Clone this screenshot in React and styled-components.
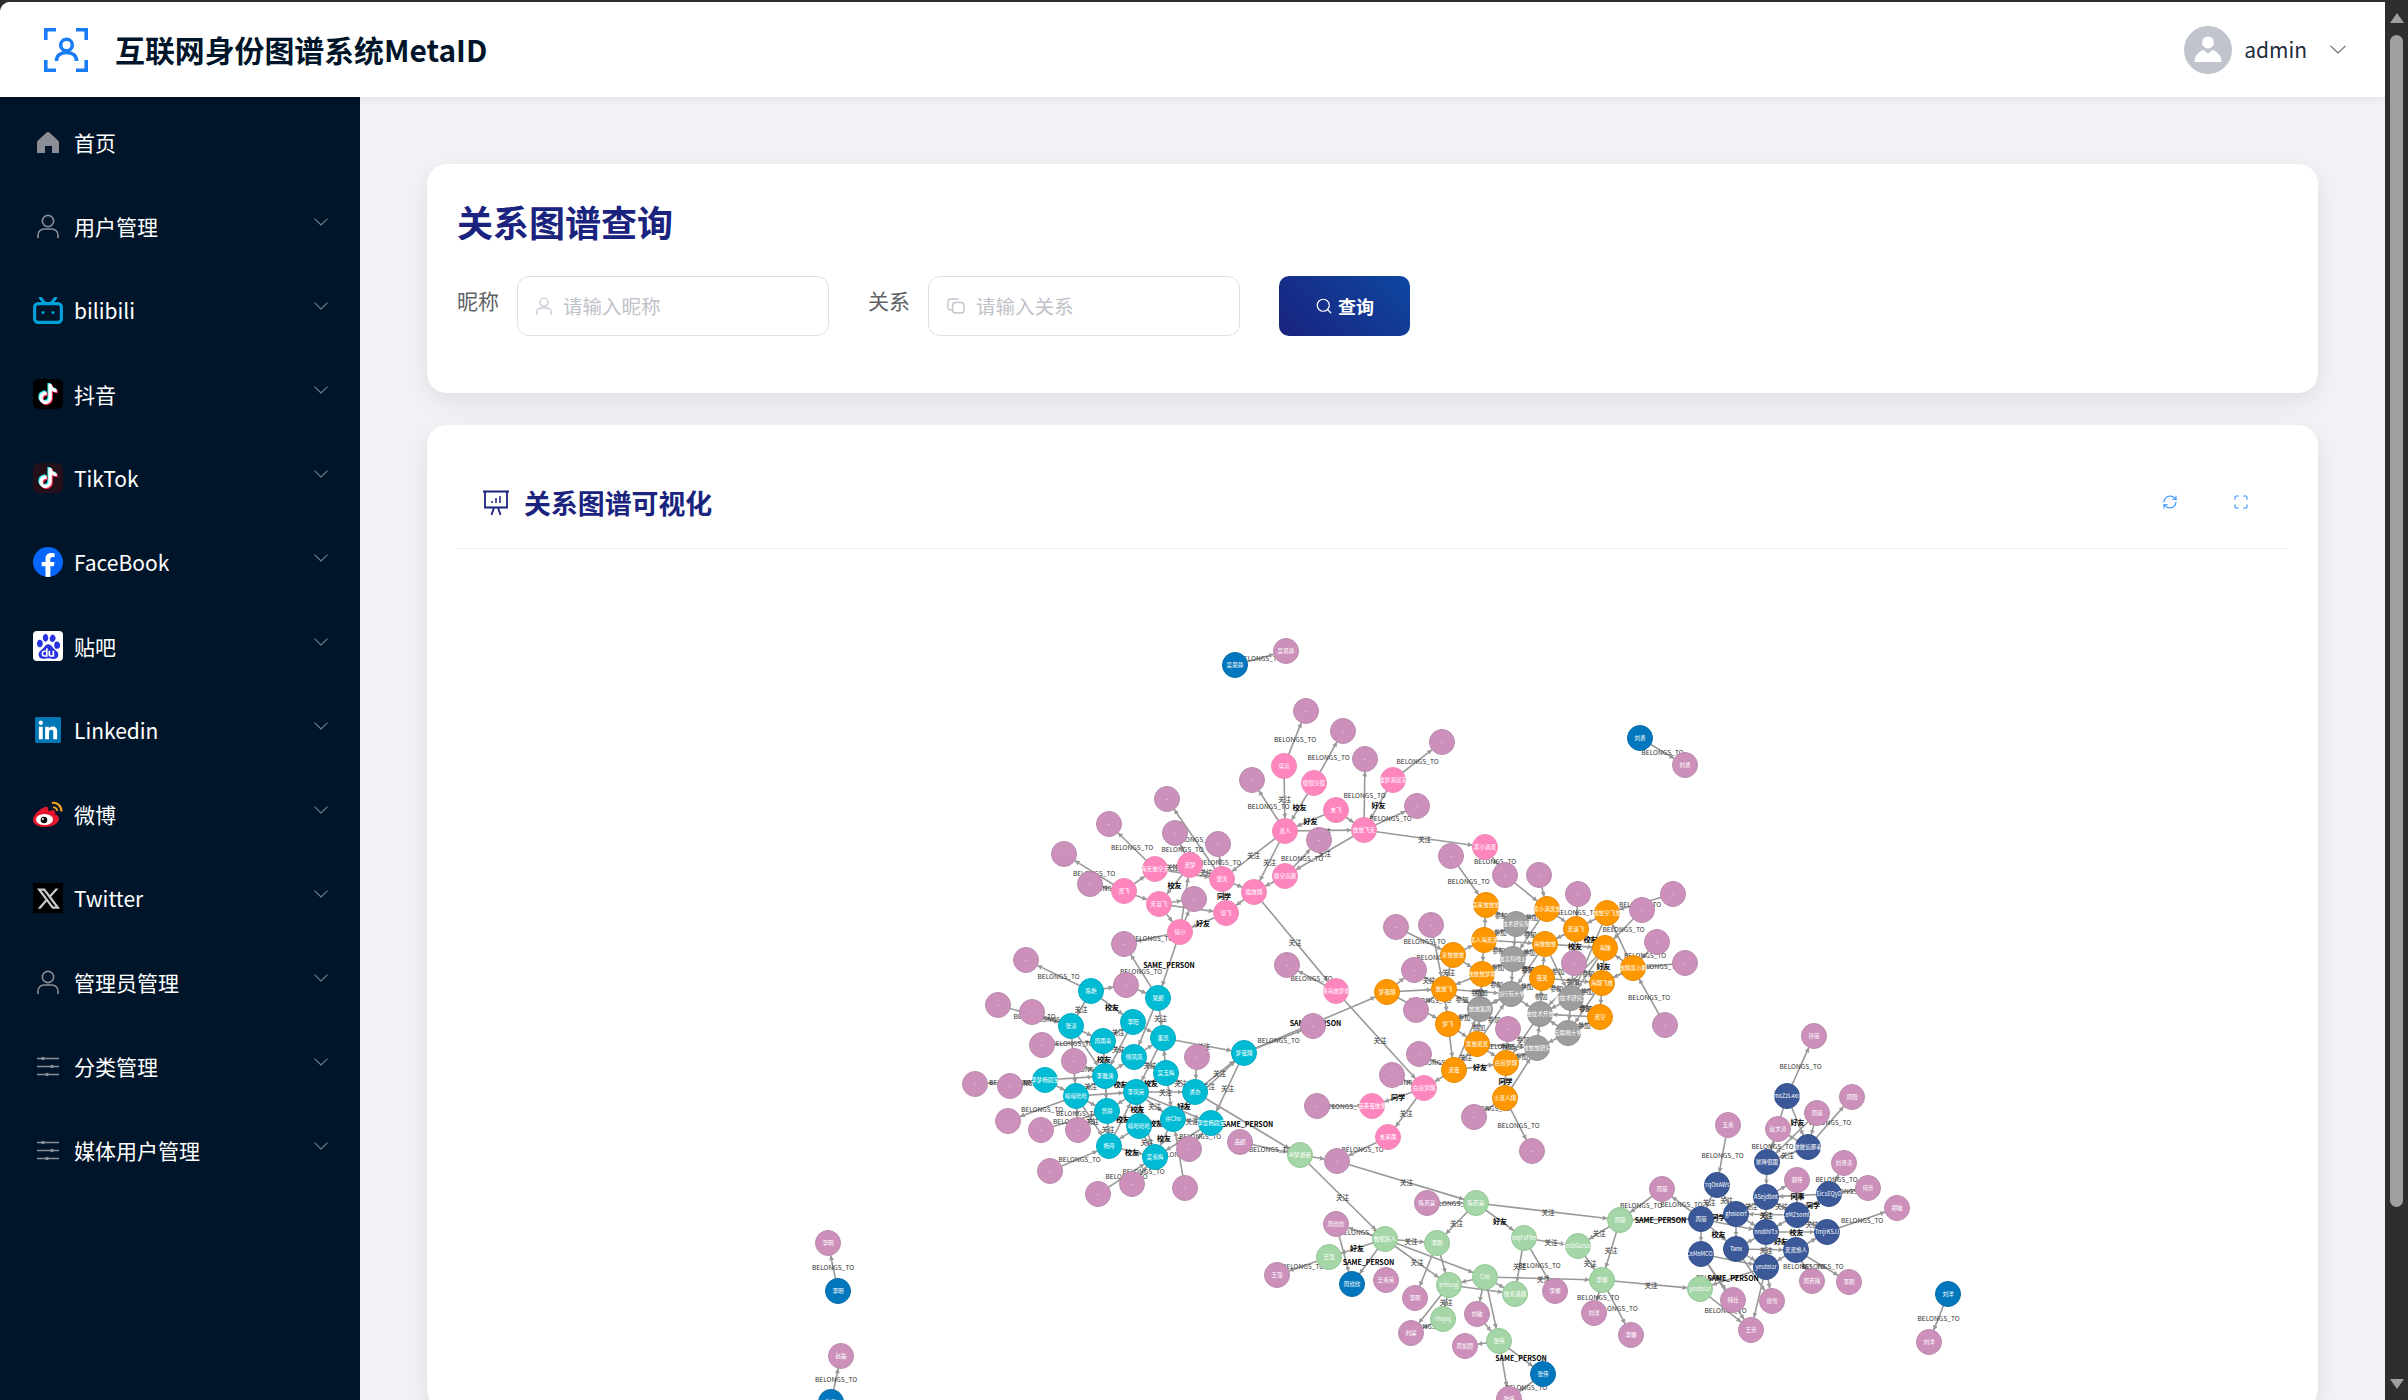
import React from 'react';
import styled, { createGlobalStyle } from 'styled-components';
import { Search, RefreshCw, Maximize } from 'lucide-react';
import { SiTiktok, SiBaidu, SiLinkedin } from 'react-icons/si';
import { RiTwitterXLine } from 'react-icons/ri';

const FONT = '"Noto Sans CJK SC", "Noto Sans", sans-serif';

const GlobalStyle = createGlobalStyle`
    html, body {
        margin: 0;
        padding: 0;
        background: #2e2e2e;
        overflow: hidden;
        font-family: ${FONT};
    }
    * {
        box-sizing: border-box;
    }
`;

// id x y kind label (positions are page coordinates)
const NODE_DATA = `
b1 1235 665 b 吴思静
q1 1286 651 u 吴思静
b2 1640 738 b 刘勇
q2 1685 765 u 刘勇
k1 1284 766 k 穿高
k2 1314 783 k 很很尖很
k3 1393 780 k 谁梦满昆东
k4 1336 810 k 未飞
k5 1364 830 k 放放飞天
k6 1285 831 k 灵人
k7 1285 876 k 跳空高跳
k8 1155 869 k 海天放空天
k9 1190 865 k 灵梦
k10 1222 879 k 灌天
k11 1254 892 k 猫放翔
k12 1124 891 k 灵飞
k13 1159 904 k 天蓝飞
k14 1226 913 k 穿飞
k15 1180 932 k 惊小
k16 1485 847 k 黑小满灵
k17 1336 991 k 珠海放梦燎
k18 1424 1088 k 白煎梦翔
k19 1372 1106 k 品茶夜放笑
k20 1388 1137 k 未来雨
p1 1306 711 u -
p2 1343 731 u -
p3 1442 742 u -
p4 1365 759 u -
p5 1252 780 u -
p6 1417 806 u -
p7 1319 840 u -
p8 1167 799 u -
p9 1109 824 u -
p10 1175 833 u -
p11 1218 844 u -
p12 1064 854 u -
p13 1090 884 u -
p14 1194 899 u -
p15 1124 944 u -
p16 1451 856 u -
c1 1091 991 c 陈艳
c2 1158 998 c 梵朗
c3 1071 1026 c 张涛
c4 1133 1022 c 李阳
c5 1163 1038 c 董凯
c6 1103 1041 c 周雨青
c7 1134 1057 c 傅凤凤
c8 1166 1073 c 吴玉梅
c9 1105 1076 c 李雅涵
c10 1045 1080 c 李梦杨圆宝
c11 1076 1096 c 嘻嘻哈哈
c12 1136 1092 c 李凤英
c13 1195 1092 c 勇办
c14 1107 1111 c 曾静
c15 1139 1126 c 嘻哈哈哈
c16 1173 1119 c 许Cho
c17 1211 1123 c 李世杨圆宝
c18 1109 1146 c 杨丹
c19 1155 1157 c 吴秀梅
c20 1244 1053 c 梦夜翔
r1 1026 960 u -
r2 1126 985 u -
r3 998 1005 u -
r4 1032 1012 u -
r5 1042 1045 u -
r6 1074 1061 u -
r7 1197 1057 u -
r8 975 1084 u -
r9 1010 1086 u -
r10 1008 1121 u -
r11 1041 1130 u -
r12 1078 1130 u -
r13 1240 1142 u 品朗
r14 1189 1149 u -
r15 1050 1171 u -
r16 1132 1184 u -
r17 1098 1194 u -
r18 1185 1188 u -
t1 1287 965 u -
t2 1313 1026 u -
t3 1317 1106 u -
t4 1337 1161 u -
o1 1387 992 o 梦夜翔
o2 1486 905 o 菜来放放放
o3 1547 909 o 黑小满灵放
o4 1607 913 o 放放空飞放
o5 1576 929 o 灵速飞
o6 1484 940 o 黑人海灵灵
o7 1545 944 o 海放放放
o8 1605 948 o 海翔
o9 1453 955 o 亲放放放
o10 1633 968 o 放翔黑小鹏
o11 1482 974 o 放放放梦翔
o12 1542 978 o 夜灵
o13 1602 983 o 海翔飞放
o14 1444 989 o 放放飞
o15 1600 1017 o 灵空
o16 1448 1024 o 梦飞
o17 1477 1044 o 黑放灵灵
o18 1506 1063 o 白煎梦翔
o19 1454 1070 o 灵夜
o20 1505 1098 o 小灵人翔
g1 1516 924 g 技术研究院
g2 1513 959 g 放放高科技公司
g3 1511 994 g 创行有大学
g4 1571 998 g 数技术研究放
g5 1480 1009 g 放放集团
g6 1540 1014 g 放技术开放
g7 1568 1033 g 五联网大学
g8 1537 1048 g 放放放研究
s1 1505 875 u -
s2 1539 875 u -
s3 1578 894 u -
s4 1673 894 u -
s5 1642 910 u -
s6 1396 927 u -
s7 1431 925 u -
s8 1657 942 u -
s9 1685 963 u -
s10 1574 963 u -
s11 1414 970 u -
s12 1416 1010 u -
s13 1508 1029 u -
s14 1665 1025 u -
s15 1419 1054 u -
s16 1392 1075 u -
s17 1474 1117 u -
s18 1532 1151 u -
e1 1300 1155 e AI梦游者
e2 1476 1203 e 陈若昊
e3 1620 1220 e 周丽
e4 1385 1239 e 数据狂人
e5 1437 1243 e 李刚
e6 1524 1238 e 9tqF3Ffm
e7 1578 1246 e TechGuru88
e8 1329 1257 e 王强
e9 1485 1277 e Cell
e10 1602 1280 e 李娜
e11 1449 1285 e erh50yj
e12 1515 1294 e 搜索淄烟
e13 1700 1289 e yeut8l1r
e14 1443 1319 e rhsyuj
e15 1499 1341 e 张伟
u1 1427 1203 u 陈若昊
u2 1336 1224 u 周欣欣
u3 1277 1275 u 王强
u4 1386 1280 u 王秀英
u5 1415 1298 u 李刚
u6 1555 1291 u 李娜
u7 1594 1313 u 刘洋
u8 1477 1314 u 刘敏
u9 1411 1333 u 刘昊
u10 1631 1335 u 李娜
u11 1465 1346 u 周如霞
u12 1509 1399 u 张伟
v1 1352 1284 b 周欣欣
v2 1543 1374 b 张伟
n1 1787 1096 n m6ZzL4x0
n2 1808 1147 n 做做追那看
n3 1767 1162 n 暴降很跟
n4 1717 1185 n 7qO8AWs
n5 1829 1194 n Eic1EQyD
n6 1766 1197 n ASejdbnt
n7 1797 1215 n L8MZ5omU
n8 1736 1214 n gh8l6erf
n9 1701 1219 n 周丽
n10 1766 1232 n nndlhIT3
n11 1827 1232 n TmjrKSJJ
n12 1736 1249 n Tanx
n13 1701 1254 n C8M8MCO1
n14 1796 1250 n 灵灵旅人
n15 1766 1267 n yeut8l1r
w1 1814 1036 u 孙丽
w2 1852 1097 u 周阳
w3 1817 1113 u 周丽
w4 1728 1125 u 五秀
w5 1778 1129 u 赵文涛
w6 1844 1163 u 刘泽涛
w7 1797 1180 u 郑伟
w8 1868 1188 u 何芳
w9 1662 1189 u 周丽
w10 1897 1208 u 郑敏
w11 1812 1281 u 周若曦
w12 1849 1282 u 李刚
w13 1733 1300 u 韩壮
w14 1772 1301 u 唐雪
w15 1751 1330 u 王芳
b3 1948 1294 b 刘洋
x1 1929 1342 u 刘洋
z1 828 1243 u 李明
b4 838 1291 b 李明
z2 841 1356 u 赵磊
b5 831 1402 b 赵磊
`;

// from to label: B belongs, F follow, Y friend, X alumni, T classmate, W colleague, S same person, C joined, - none
const EDGE_DATA = `
b1 q1 B
b2 q2 B
k1 p1 B
k2 p2 B
k5 p4 B
k3 p3 B
k6 p5 B
k3 k5 Y
k1 k6 F
k2 k6 X
k4 k6 Y
k6 k5 F
k5 k7 F
k7 p7 B
k6 k11 F
k6 k10 F
k4 k5 -
k5 p6 B
k5 k16 F
k7 k11 -
k16 s1 B
p16 o2 B
k8 p9 B
k10 p8 B
k9 p10 B
k10 p11 B
k12 p12 B
k12 p13 B
k13 p14 -
k15 p15 B
k8 k9 F
k8 k10 -
k9 k10 F
k10 k11 -
k12 k13 -
k13 k14 -
k13 k15 -
k14 k15 Y
k11 k14 -
k9 k13 X
k10 k14 T
k12 k8 -
k15 k9 -
k15 p14 -
k11 k17 F
k17 t1 B
k17 k18 F
k15 c2 S
c1 r1 B
c2 p15 B
c1 r2 -
r2 c2 -
r3 c3 B
r4 c3 B
r5 c6 B
r6 c9 B
c10 r8 B
c10 r9 B
c11 r10 B
r11 c14 B
r12 c11 B
r15 c18 B
r17 c19 B
r16 c19 B
r18 c16 B
r14 c17 B
r7 c13 -
r13 e1 B
c13 e1 S
c5 c20 F
c13 c20 F
c16 c20 F
c20 c17 F
c20 t2 B
c20 o1 S
c1 c4 X
c1 c3 F
c2 c5 F
c4 c5 -
c4 c6 F
c3 c6 -
c3 c9 -
c6 c7 F
c6 c9 X
c7 c8 F
c7 c5 -
c8 c5 -
c9 c12 X
c9 c7 -
c9 c11 F
c10 c11 -
c10 c9 -
c11 c12 -
c11 c14 -
c12 c13 F
c12 c8 X
c12 c15 X
c12 c14 -
c13 c16 Y
c13 c8 F
c8 c16 -
c14 c15 X
c14 c18 F
c15 c18 -
c15 c19 F
c16 c19 X
c16 c17 F
c17 c19 F
c18 c19 X
c18 c12 -
c19 c12 -
c15 c16 X
c11 c18 F
c12 c16 F
c5 c12 -
c4 c9 -
c6 c14 -
c2 c7 -
c9 c14 -
c3 c11 -
c12 c17 -
s1 o3 -
s2 o3 -
s3 o5 B
s4 o4 B
s5 o8 B
s8 o10 B
s9 o10 B
s10 o13 -
s6 o9 B
s7 o14 B
s11 o14 F
o1 s11 -
o1 o14 -
o1 o16 -
o14 s12 B
o14 o16 -
o9 o14 F
o9 o6 -
o9 o11 -
o6 o2 -
o6 o11 -
o11 o14 -
o2 g1 C
o3 g1 C
o3 o5 -
o5 o7 -
o6 g2 C
o7 g2 C
o7 g1 -
o12 g2 C
o12 g3 C
o11 g3 C
o14 g5 C
o16 g5 C
g5 o11 C
o5 g4 C
o8 g4 C
o13 g4 C
o12 g4 C
o15 g7 C
o15 g4 C
o13 g6 C
g6 o12 C
g6 o18 C
g7 g6 -
o17 g8 C
o18 g8 C
o3 g2 C
o6 g1 C
o7 g3 C
o11 g2 C
o14 g3 C
o16 g3 C
o17 g5 C
o17 g3 C
o8 g6 C
o13 g7 C
o10 g4 C
o7 g4 C
o5 g2 C
o4 g4 -
o19 g5 -
o20 g8 -
o16 o17 -
o16 o19 -
o17 o19 F
o17 o18 -
o19 o18 Y
o19 s15 B
o19 k18 -
s16 k18 B
k18 k19 T
k18 k20 F
k19 t3 B
o18 o20 T
o20 s17 B
o20 s18 B
o10 o13 -
o10 o8 -
o10 o4 -
o4 o5 -
o8 o13 Y
o13 o15 -
o15 g6 -
s13 o18 B
s14 o10 B
g1 g2 -
g2 g3 -
g3 g5 -
g3 g6 -
g4 g7 -
g7 g8 -
g8 g6 -
o12 o7 -
o12 o13 -
o7 o8 X
o5 o8 X
o6 o7 -
k20 t4 B
e1 t4 -
t4 e2 F
e1 e4 F
u1 e2 B
e2 e3 F
e2 e5 F
e2 e6 Y
e3 n9 S
e3 e7 F
e3 e10 F
e6 e7 F
e7 e10 F
e4 e5 F
e4 e11 F
e4 e9 -
e4 e8 Y
e4 u2 B
e8 u3 B
e4 v1 S
u2 v1 -
e5 e11 -
e5 u5 -
e9 e10 F
e9 e11 -
e10 e13 F
e9 e12 -
e11 e12 -
e6 e12 F
e6 u6 B
e10 u7 B
e10 u10 B
e11 e14 F
e9 u8 -
e9 e15 -
u8 e15 -
e15 u11 -
e15 v2 S
v2 u12 B
e15 u12 -
e11 u9 -
e14 u9 B
n1 w1 B
n1 n2 Y
n1 n3 -
n2 w2 B
n2 w5 -
n3 w5 B
n2 n3 F
n3 n6 -
w3 n3 -
w3 n2 -
w4 n4 B
n4 n8 F
n4 n9 F
n6 w7 -
n6 n7 F
w7 n7 -
n5 w6 B
n5 n7 T
n5 w8 B
n5 n6 W
n11 w10 B
n6 n8 F
n6 n10 F
n7 n8 F
n7 n10 -
n7 n11 F
n8 n9 T
n8 n10 -
n8 n12 -
n9 n10 -
n9 n12 X
n9 n13 -
n9 w9 B
n10 n11 X
n10 n14 Y
n10 n12 -
n10 n15 -
n12 n14 F
n12 n15 -
n13 n15 -
n14 n15 -
n14 n11 -
n14 w11 B
n14 w12 B
n13 w13 B
n13 w15 -
n12 w14 -
n15 e13 S
n15 w14 -
n15 w15 -
e13 w15 B
w9 e3 B
b3 x1 B
b4 z1 B
b5 z2 B
`;

const NODES = NODE_DATA.trim().split('\n').map((line) => {
    const [id, x, y, kind, label] = line.split(' ');
    return { id, x: Number(x), y: Number(y), kind, label };
});

const NODE_BY_ID = Object.fromEntries(NODES.map((node) => [node.id, node]));

const EDGES = EDGE_DATA.trim().split('\n').map((line) => {
    const [from, to, type] = line.split(' ');
    return { from: NODE_BY_ID[from], to: NODE_BY_ID[to], type };
});

const EDGE_TEXT = {
    B: 'BELONGS_TO',
    F: '关注',
    Y: '好友',
    X: '校友',
    T: '同学',
    W: '同事',
    S: 'SAME_PERSON',
    C: '参加'
};

const STRONG_TYPES = 'YXTSW';

const NODE_COLORS = {
    u: ['#cc90ba', '#b98aac'],
    k: ['#ff85bf', '#ee8ab8'],
    c: ['#00bbd4', '#00acc1'],
    o: ['#ff9800', '#e68a00'],
    g: ['#9e9e9e', '#8f8f8f'],
    e: ['#a5d6a7', '#92c695'],
    n: ['#3b5998', '#34508a'],
    b: ['#0277bd', '#026aa8']
};

const NODE_RADIUS = 12.5;

const Frame = styled.div`
    display: flex;
    width: 2408px;
    height: 1400px;
    overflow: hidden;
    background: #2e2e2e;
`;

const Viewport = styled.div`
    flex: 1;
    display: flex;
    flex-direction: column;
    min-width: 0;
    margin-top: 2px;
    overflow: hidden;
    border-top-left-radius: 10px;
    background: #f0f2f5;
`;

const ScrollRail = styled.div`
    display: flex;
    flex-direction: column;
    align-items: center;
    width: 23px;
    padding-top: 13px;
`;

const ScrollThumb = styled.div`
    width: 13px;
    height: 1172px;
    margin-top: 12px;
    border-radius: 7px;
    background: #9f9f9f;
`;

const ScrollUp = styled.div`
    width: 0;
    height: 0;
    border-left: 7px solid transparent;
    border-right: 7px solid transparent;
    border-bottom: 10px solid #9f9f9f;
`;

const ScrollDown = styled.div`
    width: 0;
    height: 0;
    margin-top: auto;
    margin-bottom: 11px;
    border-left: 7px solid transparent;
    border-right: 7px solid transparent;
    border-top: 10px solid #9f9f9f;
`;

const TopBar = styled.header`
    position: relative;
    z-index: 2;
    flex: none;
    display: flex;
    align-items: center;
    height: 95px;
    padding: 0 39px 0 44px;
    background: #fff;
    box-shadow: 0 2px 8px rgba(0, 0, 0, 0.06);
`;

const LogoMark = styled.svg`
    width: 44px;
    height: 44px;
    flex: none;
    margin-top: 1px;
    color: #1a7cf5;
`;

const BrandName = styled.h1`
    margin: 0 0 2px 27px;
    font-size: 29.9px;
    line-height: 44px;
    font-weight: 700;
    color: #001529;
`;

const UserArea = styled.div`
    display: flex;
    align-items: center;
    margin-left: auto;
`;

const Avatar = styled.div`
    display: flex;
    width: 48px;
    height: 48px;
    border-radius: 50%;
    background: #c0c5cd;
`;

const UserName = styled.span`
    margin: 0 0 2px 12px;
    font-size: 21px;
    color: #1f2d3d;
`;

const CaretDown = styled.svg`
    width: 16px;
    height: 9px;
    margin-left: 23px;
    fill: none;
    stroke: #666;
    stroke-width: 1.1;
`;

const Body = styled.div`
    flex: 1;
    display: flex;
    min-height: 0;
`;

const Sidebar = styled.nav`
    flex: none;
    width: 360px;
    padding-top: 3px;
    background: #001529;
`;

const MenuItem = styled.div`
    display: flex;
    align-items: center;
    height: 84px;
    padding: 0 32px 0 33px;
    font-size: 21px;
    color: #fff;
`;

const MenuIcon = styled.span`
    flex: none;
    display: flex;
    align-items: center;
    justify-content: center;
    width: 30px;
    height: 30px;
    margin-right: 11px;
    color: #8b8e96;
`;

const MenuCaret = styled.svg`
    width: 14px;
    height: 8px;
    margin-left: auto;
    margin-bottom: 8px;
    fill: none;
    stroke: rgba(255, 255, 255, 0.45);
    stroke-width: 1.1;
`;

const TikTokBadge = styled.span`
    position: relative;
    display: block;
    width: 30px;
    height: 30px;
    border-radius: 6px;
    background: ${(props) => props.$bg};
    svg {
        position: absolute;
        top: 5px;
        left: 5px;
        width: 20px;
        height: 20px;
    }
`;

const SquareBadge = styled.span`
    display: flex;
    align-items: center;
    justify-content: center;
    width: ${(props) => props.$size}px;
    height: ${(props) => props.$size}px;
    border-radius: ${(props) => props.$radius}px;
    background: ${(props) => props.$bg};
    color: ${(props) => props.$color};
`;

const Main = styled.main`
    flex: 1;
    min-width: 0;
    padding: 67px 67px 0;
    overflow: hidden;
`;

const QueryCard = styled.section`
    height: 229px;
    padding: 35px 30px 0;
    border-radius: 20px;
    background: #fff;
    box-shadow: 0 8px 24px rgba(0, 0, 0, 0.08);
`;

const PageTitle = styled.h2`
    margin: 0 0 33px;
    font-size: 36px;
    line-height: 44px;
    font-weight: 700;
    color: #1a237e;
`;

const QueryForm = styled.form`
    display: flex;
    align-items: flex-start;
`;

const FieldLabel = styled.label`
    width: 42px;
    margin-right: 18px;
    font-size: 21px;
    line-height: 48px;
    white-space: nowrap;
    color: #606266;
`;

const InputBox = styled.div`
    display: flex;
    align-items: center;
    gap: 11px;
    width: 312px;
    height: 60px;
    margin-right: 39px;
    padding: 0 18px;
    border: 1px solid #dcdfe6;
    border-radius: 12px;
    color: #c0c4cc;
`;

const TextInput = styled.input`
    flex: 1;
    min-width: 0;
    margin-bottom: 2px;
    padding: 0;
    border: 0;
    outline: 0;
    background: transparent;
    font-family: ${FONT};
    font-size: 19.5px;
    &::placeholder {
        color: #bfc2c9;
        opacity: 1;
    }
`;

const QueryButton = styled.button`
    display: flex;
    align-items: center;
    justify-content: center;
    gap: 5px;
    width: 131px;
    height: 60px;
    padding: 0;
    border: 0;
    border-radius: 10px;
    background: linear-gradient(45deg, #1a237e, #0d47a1);
    color: #fff;
    font-family: ${FONT};
    font-size: 18px;
    font-weight: 700;
    cursor: pointer;
`;

const GraphCard = styled.section`
    margin-top: 32px;
    padding: 0 30px;
    border-radius: 20px;
    background: #fff;
    box-shadow: 0 8px 24px rgba(0, 0, 0, 0.08);
`;

const GraphHeader = styled.div`
    display: flex;
    align-items: center;
    height: 124px;
    padding: 32px 39px 0 25px;
    border-bottom: 1px solid #ebeef5;
`;

const GraphTitle = styled.h3`
    margin: 0 0 0 14px;
    font-size: 26.9px;
    line-height: 36px;
    font-weight: 700;
    color: #1a237e;
`;

const GraphTools = styled.div`
    display: flex;
    align-items: center;
    gap: 55px;
    margin-left: auto;
    margin-bottom: 2px;
    color: #2f8fff;
`;

const GraphCanvas = styled.svg`
    display: block;
    width: 1831px;
    height: 860px;
    font-family: ${FONT};
`;

const EdgeLine = styled.line`
    stroke: #999;
    stroke-width: 1.6;
`;

const EdgeText = styled.text`
    text-anchor: middle;
    dominant-baseline: central;
    font-size: ${(props) => (props.$strong ? 7 : 6.6)}px;
    font-weight: ${(props) => (props.$strong ? 700 : 400)};
    fill: ${(props) => (props.$strong ? '#000' : '#333')};
`;

const NodeDot = styled.circle`
    fill: ${(props) => NODE_COLORS[props.$kind][0]};
    stroke: ${(props) => NODE_COLORS[props.$kind][1]};
    stroke-width: 1;
`;

const NodeText = styled.text`
    text-anchor: middle;
    dominant-baseline: central;
    font-size: 5.6px;
    fill: #fff;
`;

function PersonIcon({ width = 22, height = 24 }) {
    return (
        <svg width={width} height={height} viewBox="0 0 22 24" fill="none" stroke="currentColor" strokeWidth="1.6">
            <circle cx="11" cy="7" r="5.6" />
            <path d="M1 24v-3a6 6 0 0 1 6-6h8a6 6 0 0 1 6 6v3" />
        </svg>
    );
}

function HomeIcon() {
    return (
        <svg width="22" height="21" viewBox="0 0 22 21" fill="currentColor">
            <path d="M11 0c.5 0 1 .2 1.4.6L21 8.6c.6.6 1 1.4 1 2.2V21h-7v-7H8v7H0V10.8c0-.8.4-1.6 1-2.2L9.6.6C10 .2 10.5 0 11 0z" />
        </svg>
    );
}

function SlidersIcon() {
    return (
        <svg width="22" height="21" viewBox="0 0 22 21" fill="currentColor" stroke="currentColor">
            <path d="M0 2.5h22M0 10.5h22M0 18.5h22" fill="none" strokeWidth="1.6" />
            <circle cx="6" cy="2.5" r="1.8" stroke="none" />
            <circle cx="15" cy="10.5" r="1.8" stroke="none" />
            <circle cx="10" cy="18.5" r="1.8" stroke="none" />
        </svg>
    );
}

function BilibiliIcon() {
    return (
        <svg width="30" height="27" viewBox="0 0 30 27" fill="none" stroke="#00a1d6" strokeWidth="3.2">
            <rect x="1.6" y="6.6" width="26.8" height="18.8" rx="3.6" />
            <path d="M7.5 1l4.5 5.500M22.500 1L18 6.500" strokeLinecap="round" />
            <circle cx="10" cy="15.500" r="1.600" fill="#00a1d6" stroke="none" />
            <circle cx="20" cy="15.500" r="1.600" fill="#00a1d6" stroke="none" />
        </svg>
    );
}

function FacebookIcon() {
    return (
        <svg width="30" height="30" viewBox="0 0 30 30">
            <circle cx="15" cy="15" r="15" fill="#0866ff" />
            <path
                fill="#fff"
                d="M20.8 19.3l.7-4.3h-4.2v-2.8c0-1.2.6-2.3 2.4-2.3h1.9V6.2s-1.7-.3-3.4-.3c-3.4 0-5.7 2.1-5.7 5.8V15H8.7v4.3h3.8v10.5c.8.1 1.6.2 2.5.2s1.6-.1 2.4-.2V19.3z"
            />
        </svg>
    );
}

function WeiboIcon() {
    return (
        <svg width="30" height="26" viewBox="0 0 30 26">
            <path
                fill="#e6162d"
                d="M12 6C7 7.500 0 14 0 19c0 4.500 6 7 12 7 8 0 14-4 14-8.500 0-2.500-2.500-3.500-4-4 .5-1.500.5-3-.5-3.800-1.700-1.200-4.800 0-6 .5 0-1.500 0-2.500-.7-3.500C14.300 5.200 13 5.700 12 6z"
            />
            <ellipse cx="11.500" cy="18.500" rx="8.500" ry="5.500" fill="#fff" />
            <circle cx="11" cy="19" r="3.300" fill="#111" />
            <circle cx="9.800" cy="18" r="1" fill="#fff" />
            <path d="M19 2c4.500-1 9.500 2.500 9.500 8.500" fill="none" stroke="#f5a623" strokeWidth="2" />
            <path d="M20 6.500c2.200-.5 4.200 1.200 4.200 3.500" fill="none" stroke="#f5a623" strokeWidth="1.800" />
        </svg>
    );
}

function TikTokIcon({ bg }) {
    return (
        <TikTokBadge $bg={bg}>
            <SiTiktok color="#25f4ee" style={{ transform: 'translate(-1px, -1px)' }} />
            <SiTiktok color="#fe2c55" style={{ transform: 'translate(1px, 1px)' }} />
            <SiTiktok color="#fff" />
        </TikTokBadge>
    );
}

const MENU = [
    { name: '首页', icon: <HomeIcon />, leaf: true },
    { name: '用户管理', icon: <PersonIcon /> },
    { name: 'bilibili', icon: <BilibiliIcon /> },
    { name: '抖音', icon: <TikTokIcon bg="#000" /> },
    { name: 'TikTok', icon: <TikTokIcon bg="#24101a" /> },
    { name: 'FaceBook', icon: <FacebookIcon /> },
    {
        name: '贴吧',
        icon: (
            <SquareBadge $size={30} $radius={4} $bg="#fff" $color="#2932e1">
                <SiBaidu size={25} />
            </SquareBadge>
        )
    },
    {
        name: 'Linkedin',
        icon: (
            <SquareBadge $size={26} $radius={3} $bg="#fff" $color="#0077b5">
                <SiLinkedin size={26} />
            </SquareBadge>
        )
    },
    { name: '微博', icon: <WeiboIcon /> },
    {
        name: 'Twitter',
        icon: (
            <SquareBadge $size={30} $radius={0} $bg="#000" $color="#c8c8c8">
                <RiTwitterXLine size={27} />
            </SquareBadge>
        )
    },
    { name: '管理员管理', icon: <PersonIcon /> },
    { name: '分类管理', icon: <SlidersIcon /> },
    { name: '媒体用户管理', icon: <SlidersIcon /> }
];

function RelationGraph() {
    return (
        <GraphCanvas viewBox="457 549 1831 860">
            <defs>
                <marker id="edge-arrow" markerUnits="userSpaceOnUse" markerWidth="6" markerHeight="6" refX="5" refY="3" orient="auto">
                    <path d="M0 0.5L5 3L0 5.5z" fill="#999" />
                </marker>
            </defs>
            {EDGES.map(({ from, to }) => {
                const dx = to.x - from.x;
                const dy = to.y - from.y;
                const length = Math.hypot(dx, dy);
                const ratio = (length - NODE_RADIUS) / length;
                return (
                    <EdgeLine
                        key={`${from.id}-${to.id}`}
                        x1={from.x}
                        y1={from.y}
                        x2={from.x + dx * ratio}
                        y2={from.y + dy * ratio}
                        markerEnd="url(#edge-arrow)"
                    />
                );
            })}
            {EDGES.filter((edge) => edge.type !== '-').map(({ from, to, type }) => (
                <EdgeText
                    key={`label-${from.id}-${to.id}`}
                    $strong={STRONG_TYPES.includes(type)}
                    x={(from.x + to.x) / 2}
                    y={(from.y + to.y) / 2}
                >
                    {EDGE_TEXT[type]}
                </EdgeText>
            ))}
            {NODES.map((node) => (
                <g key={node.id}>
                    <NodeDot $kind={node.kind} cx={node.x} cy={node.y} r={NODE_RADIUS} />
                    <NodeText x={node.x} y={node.y}>{node.label}</NodeText>
                </g>
            ))}
        </GraphCanvas>
    );
}

export default function App() {
    return (
        <Frame>
            <GlobalStyle />
            <Viewport>
                <TopBar>
                    <LogoMark viewBox="0 0 44 44" fill="none" stroke="currentColor" strokeWidth="3.6">
                        <path d="M1.8 12V1.8H12M32 1.8H42.200V12M1.8 32V42.200H12M32 42.200H42.200V32" />
                        <circle cx="22.500" cy="17" r="5.800" />
                        <path d="M12.500 33c0-5.500 4-8.500 10-8.500s10 3 10 8.500" />
                    </LogoMark>
                    <BrandName>互联网身份图谱系统MetaID</BrandName>
                    <UserArea>
                        <Avatar>
                            <svg width="48" height="48" viewBox="0 0 48 48" fill="#fff">
                                <circle cx="24" cy="16.500" r="6" />
                                <path d="M10.500 36c0-6.500 4-10 9-12l4.500 3.800 4.500-3.800c5 2 9 5.500 9 12z" />
                            </svg>
                        </Avatar>
                        <UserName>admin</UserName>
                        <CaretDown viewBox="0 0 16 9">
                            <path d="M.5.800L8 8l7.500-7.200" />
                        </CaretDown>
                    </UserArea>
                </TopBar>
                <Body>
                    <Sidebar>
                        {MENU.map((item) => (
                            <MenuItem key={item.name}>
                                <MenuIcon>{item.icon}</MenuIcon>
                                {item.name}
                                {!item.leaf && (
                                    <MenuCaret viewBox="0 0 14 8">
                                        <path d="M.5.600L7 7l6.500-6.400" />
                                    </MenuCaret>
                                )}
                            </MenuItem>
                        ))}
                    </Sidebar>
                    <Main>
                        <QueryCard>
                            <PageTitle>关系图谱查询</PageTitle>
                            <QueryForm>
                                <FieldLabel>昵称</FieldLabel>
                                <InputBox>
                                    <PersonIcon width={16} height={18} />
                                    <TextInput placeholder="请输入昵称" />
                                </InputBox>
                                <FieldLabel>关系</FieldLabel>
                                <InputBox>
                                    <svg width="18" height="16" viewBox="0 0 18 16" fill="none" stroke="currentColor" strokeWidth="1.4">
                                        <path d="M11.500 1H3.500A2.500 2.500 0 0 0 1 3.500v6A2.500 2.500 0 0 0 3.500 12H5" />
                                        <rect x="5.500" y="4.500" width="11.500" height="10.500" rx="3" />
                                    </svg>
                                    <TextInput placeholder="请输入关系" />
                                </InputBox>
                                <QueryButton type="button">
                                    <Search size={18} strokeWidth={1.6} />
                                    查询
                                </QueryButton>
                            </QueryForm>
                        </QueryCard>
                        <GraphCard>
                            <GraphHeader>
                                <svg width="28" height="26" viewBox="0 0 28 26" fill="none" stroke="#1a237e" strokeWidth="1.8">
                                    <path d="M1 1.500h26M3 1.500v16h22v-16M9.500 25l2.500-7.500M18.500 25L16 17.500" />
                                    <path d="M10 13v-2M14 13V8M18 13V6" strokeWidth="1.5" />
                                </svg>
                                <GraphTitle>关系图谱可视化</GraphTitle>
                                <GraphTools>
                                    <RefreshCw size={16} strokeWidth={1.6} />
                                    <Maximize size={16} strokeWidth={1.6} />
                                </GraphTools>
                            </GraphHeader>
                            <RelationGraph />
                        </GraphCard>
                    </Main>
                </Body>
            </Viewport>
            <ScrollRail>
                <ScrollUp />
                <ScrollThumb />
                <ScrollDown />
            </ScrollRail>
        </Frame>
    );
}
